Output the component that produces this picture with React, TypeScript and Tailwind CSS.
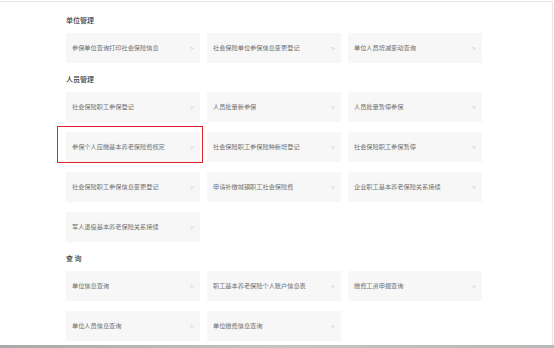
import React from "react";

type Section = {
  title: string;
  items: string[];
};

const sections: Section[] = [
  {
    title: "单位管理",
    items: [
      "参保单位查询打印社会保险信息",
      "社会保险单位参保信息变更登记",
      "单位人员增减变动查询",
    ],
  },
  {
    title: "人员管理",
    items: [
      "社会保险职工参保登记",
      "人员批量新参保",
      "人员批量暂停参保",
      "参保个人应缴基本养老保险费核定",
      "社会保险职工参保险种新增登记",
      "社会保险职工参保暂停",
      "社会保险职工参保信息变更登记",
      "申请补缴城镇职工社会保险费",
      "企业职工基本养老保险关系接续",
      "军人退役基本养老保险关系接续",
    ],
  },
  {
    title: "查 询",
    items: [
      "单位信息查询",
      "职工基本养老保险个人账户信息表",
      "缴费工资申报查询",
      "单位人员信息查询",
      "单位缴费信息查询",
    ],
  },
];

const highlighted = "参保个人应缴基本养老保险费核定";

function ServiceCard({ label }: { label: string }) {
  return (
    <div className="relative flex h-[30px] items-center justify-between bg-[#f7f7f7] pl-[6px] pr-[6px]">
      <span className="truncate text-[6.2px] text-[#6f6f6f]">{label}</span>
      <span className="text-[7px] leading-none text-[#cfcfcf]">&gt;</span>
      {label === highlighted && (
        <div className="pointer-events-none absolute -left-[9px] -right-[3px] -top-[6px] -bottom-[1px] border-[1.5px] border-[#e0242b]" />
      )}
    </div>
  );
}

export default function App() {
  return (
    <div
      className="relative h-[348px] w-[554px] overflow-hidden bg-white"
      style={{ fontFamily: '"Noto Sans CJK SC", "Noto Sans", sans-serif' }}
    >
      <div className="mt-[1px] h-[344px] w-[553px] border-r border-t border-[#e6e6e6] pl-[66px] pt-[12px]">
        {sections.map((section, i) => (
          <div key={section.title} className={i > 0 ? "mt-[10px]" : ""}>
            <h3 className="mb-[7px] h-[12px] text-[7px] leading-[12px] font-medium text-[#3a3a3a]">
              {section.title}
            </h3>
            <div className="grid w-[416px] grid-cols-3 gap-x-[7px] gap-y-[10px]">
              {section.items.map((item) => (
                <ServiceCard key={item} label={item} />
              ))}
            </div>
          </div>
        ))}
      </div>
      <div className="absolute bottom-0 left-0 h-[3px] w-full bg-gradient-to-r from-[#a9a9a9] via-[#c4c4c0] to-[#b8b8b8]" />
    </div>
  );
}
